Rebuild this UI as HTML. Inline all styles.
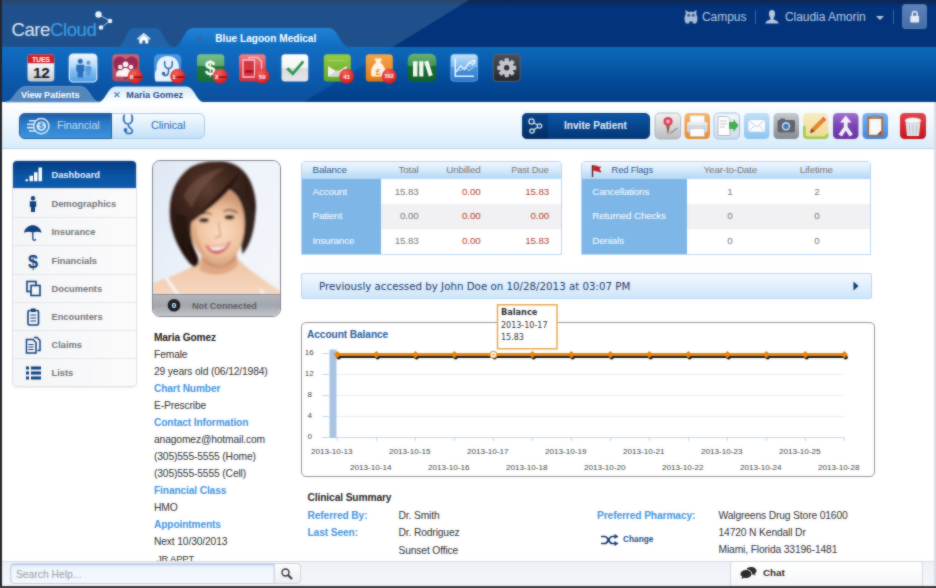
<!DOCTYPE html>
<html lang="en">
<head>
<meta charset="utf-8">
<title>CareCloud - Maria Gomez</title>
<style>
*{box-sizing:border-box;margin:0;padding:0}
html,body{width:936px;height:588px;overflow:hidden;background:#fff}
body{position:relative;font-family:"Liberation Sans",sans-serif;font-size:9.5px;color:#333}
.abs{position:absolute}
#wrap{position:absolute;left:0;top:0;width:936px;height:588px;overflow:hidden;}
#hdr{left:0;top:0;width:936px;height:47px;background:#02337b}
#hdrshade{left:0;top:0;width:936px;height:6px;background:linear-gradient(180deg,rgba(25,30,50,.5) 0,rgba(25,30,50,.42) 55%,rgba(25,30,50,0) 100%)}
#tb{left:0;top:47px;width:936px;height:55px;background:linear-gradient(180deg,#0c69ba 0%,#0a5eb0 25%,#044d9c 55%,#023f88 100%)}
#tbl{left:0;top:0;width:480px;height:103px;background:linear-gradient(180deg,rgba(200,255,240,.15) 0,rgba(200,255,240,.15) 47px,rgba(30,120,210,.3) 47px,rgba(30,120,210,.3) 103px);clip-path:polygon(0 0,469px 0,302px 103px,0 103px)}
#sub{left:0;top:101.700px;width:936px;height:47.300px;background:linear-gradient(180deg,#ffffff 0%,#f1f8fe 40%,#d9ecfb 100%);border-bottom:1px solid #b5d3ee}
#lb{left:0;top:0;width:2px;height:588px;background:#23252c}
#bb{left:0;top:586px;width:936px;height:2px;background:#3a3a3e}
#rb{left:934px;top:102px;width:2px;height:483px;background:#d9dde4}
.logo{left:11.500px;top:19px;font-size:18.5px;letter-spacing:-.4px;color:#dfe9f5;font-family:"Liberation Sans",sans-serif}
.logo b{font-weight:normal;color:#3ba0ea}
.tab1{fill:#1c5e9f}
.ic{position:absolute;top:54px;width:27px;height:27px;border-radius:4px;overflow:hidden}
.bdg{position:absolute;width:11px;height:11px;border-radius:6px;background:radial-gradient(circle at 40% 35%,#f25a55,#d0181c 70%);color:#fff;font-size:5px;font-weight:bold;text-align:center;line-height:11px;box-shadow:0 1px 1px rgba(0,0,0,.4)}
.stab{position:absolute;font-weight:bold;font-size:8px}
.usr{position:absolute;top:9.500px;color:#b9c9e2;font-size:12px;line-height:14px;white-space:nowrap;letter-spacing:-.05px}
</style>
</head>
<body>
<div id="wrap">
<div class="abs" id="hdr"></div>
<div class="abs" id="hdrshade"></div>
<div class="abs" id="tb"></div>
<div class="abs" id="tbl"></div>
<div class="abs" id="sub"></div>

<!-- header tabs -->
<svg class="abs" style="left:0;top:0" width="936" height="104" viewBox="0 0 936 104">
  <defs>
    <linearGradient id="gTabB" x1="0" y1="0" x2="0" y2="1"><stop offset="0" stop-color="#2183d6"/><stop offset="1" stop-color="#0f6cc0"/></linearGradient>
    <linearGradient id="gTabW" x1="0" y1="0" x2="0" y2="1"><stop offset="0" stop-color="#d4e8f9"/><stop offset="1" stop-color="#ffffff"/></linearGradient>
  </defs>
  <!-- home tab -->
  <path d="M116 47.5 C126 47.5 125 28 134 28 L155 28 C164 28 164 47.5 176 47.5 Z" fill="#1f64aa"/>
  <!-- blue lagoon tab -->
  <path d="M172 47.5 C184 47.5 182 28 194 28 L328 28 C340 28 338 47.5 352 47.5 Z" fill="url(#gTabB)"/>
  <!-- house icon -->
  <path d="M139.300 39 L143.800 35 L148.300 39 L148.300 43.600 L145.200 43.600 L145.200 40.600 L142.400 40.600 L142.400 43.600 L139.300 43.600 Z" fill="#fff"/>
  <path d="M137.500 39.300 L143.800 33.800 L150.100 39.300" fill="none" stroke="#fff" stroke-width="1.300"/>
  <text x="195.500" y="41.800" font-size="8.5" fill="#3c6496" font-weight="bold" font-family="Liberation Sans, sans-serif">✕</text>
  <text x="215.300" y="42.200" font-size="10.1" fill="#fff" font-weight="bold" font-family="Liberation Sans, sans-serif">Blue Lagoon Medical</text>
  <!-- sub tabs -->
  <path d="M6 102 C14 102 16 86.500 26 86.500 L80 86.500 C90 86.500 91 102 99 102 Z" fill="#5286bd" stroke="#74a2d2" stroke-width=".8"/>
  <text x="21.000" y="97.600" font-size="9.1" fill="#fff" font-weight="bold" font-family="Liberation Sans, sans-serif">View Patients</text>
  <path d="M97 102.500 C106 102.500 107 86.500 116 86.500 L186 86.500 C195 86.500 196 102.500 205 102.500 Z" fill="url(#gTabW)"/>
  <text x="112.800" y="97.800" font-size="9.200" fill="#5585bc" font-weight="bold" font-family="Liberation Sans, sans-serif">✕</text>
  <text x="126.300" y="97.500" font-size="9.15" fill="#1f4f8a" font-weight="bold" font-family="Liberation Sans, sans-serif">Maria Gomez</text>
</svg>

<!-- logo -->
<div class="abs logo">Care<b>Cloud</b></div>
<svg class="abs" style="left:90.500px;top:7px" width="28" height="28" viewBox="0 0 28 28">
  <path d="M7.500 7.500 L19 14 L10 20.500" fill="none" stroke="#9cc7f0" stroke-width="1"/>
  <circle cx="7.500" cy="7.500" r="3.200" fill="#e8f3fd"/>
  <circle cx="19" cy="14" r="2.300" fill="#e8f3fd"/>
  <circle cx="10" cy="20.500" r="2.300" fill="#e8f3fd"/>
</svg>

<!-- user area -->
<svg class="abs" style="left:684px;top:9px" width="16" height="16" viewBox="0 0 16 16"><path d="M1.500 1 L4.500 3 Q7 2.300 9.500 3 L12.500 1 L12.300 5.500 C14 8 14 11.500 12 14.500 L9 14.500 L8.500 12.500 L5.500 12.500 L5 14.500 L2 14.500 C0 11.500 0 8 1.700 5.500 Z" fill="#a9bcd8"/><circle cx="4.700" cy="6.300" r="1.500" fill="#3a5a94"/><circle cx="9.300" cy="6.300" r="1.500" fill="#3a5a94"/></svg>
<div class="usr" style="left:702px">Campus</div>
<div class="abs" style="left:755px;top:10px;width:1px;height:14px;background:#3f6399"></div>
<svg class="abs" style="left:764px;top:9px" width="16" height="16" viewBox="0 0 16 16"><path d="M8 1 C10.500 1 11 3 11 5 C11 7 10 8.500 9.500 9 L9.500 10.500 C12 11.500 14.500 12 14.500 14.500 L1.500 14.500 C1.500 12 4 11.500 6.500 10.500 L6.500 9 C6 8.500 5 7 5 5 C5 3 5.500 1 8 1Z" fill="#b8c8e0"/></svg>
<div class="usr" style="left:785px">Claudia Amorin</div>
<svg class="abs" style="left:874.500px;top:14.500px" width="10" height="6" viewBox="0 0 10 6"><path d="M1 1 L9 1 L5 5 Z" fill="#b8c8e0"/></svg>
<div class="abs" style="left:893px;top:10px;width:1px;height:14px;background:#3f6399"></div>
<div class="abs" style="left:902px;top:4px;width:25px;height:25px;border-radius:3px;background:linear-gradient(180deg,#5c82b9,#466ea8);border:1px solid #5379b0"></div>
<svg class="abs" style="left:902px;top:4px" width="25" height="25" viewBox="0 0 25 25"><rect x="8.300" y="11.800" width="8.800" height="6.800" rx="1" fill="#e4ebf6"/><path d="M10.300 12 L10.300 9.800 C10.300 6.800 15.100 6.800 15.100 9.800 L15.100 12" fill="none" stroke="#e4ebf6" stroke-width="1.500"/></svg>

<!-- toolbar icons -->
<svg class="abs" style="left:0;top:47px" width="560" height="56" viewBox="0 47 560 56" font-family="Liberation Sans, sans-serif">
  <defs>
    <linearGradient id="gCal" x1="0" y1="0" x2="0" y2="1"><stop offset="0" stop-color="#ffffff"/><stop offset=".45" stop-color="#f2f2f4"/><stop offset="1" stop-color="#c4c7cd"/></linearGradient>
    <linearGradient id="gPat" x1="0" y1="0" x2="0" y2="1"><stop offset="0" stop-color="#f2f9ff"/><stop offset=".45" stop-color="#b4d9f8"/><stop offset=".55" stop-color="#8cc4f4"/><stop offset="1" stop-color="#4d9ee6"/></linearGradient>
    <linearGradient id="gHeart" x1="0" y1="0" x2="0" y2="1"><stop offset="0" stop-color="#cc6478"/><stop offset="1" stop-color="#b04862"/></linearGradient>
    <linearGradient id="gSte" x1="0" y1="0" x2="0" y2="1"><stop offset="0" stop-color="#4c9ae4"/><stop offset="1" stop-color="#2f7fd0"/></linearGradient>
    <linearGradient id="gDol" x1="0" y1="0" x2="0" y2="1"><stop offset="0" stop-color="#7cc08c"/><stop offset=".42" stop-color="#5aa86c"/><stop offset=".44" stop-color="#237a3c"/><stop offset="1" stop-color="#1a6e32"/></linearGradient>
    <linearGradient id="gDoc" x1="0" y1="0" x2="0" y2="1"><stop offset="0" stop-color="#f08088"/><stop offset=".5" stop-color="#e04a54"/><stop offset="1" stop-color="#d23040"/></linearGradient>
    <linearGradient id="gChk" x1="0" y1="0" x2="0" y2="1"><stop offset="0" stop-color="#ffffff"/><stop offset=".5" stop-color="#f4f4f5"/><stop offset=".52" stop-color="#d9dbde"/><stop offset="1" stop-color="#e4e6e9"/></linearGradient>
    <linearGradient id="gMail" x1="0" y1="0" x2="0" y2="1"><stop offset="0" stop-color="#96cc44"/><stop offset="1" stop-color="#62a628"/></linearGradient>
    <linearGradient id="gBag" x1="0" y1="0" x2="0" y2="1"><stop offset="0" stop-color="#f4a650"/><stop offset="1" stop-color="#e2780f"/></linearGradient>
    <linearGradient id="gBook" x1="0" y1="0" x2="0" y2="1"><stop offset="0" stop-color="#68b276"/><stop offset=".42" stop-color="#3f9450"/><stop offset=".44" stop-color="#176a2c"/><stop offset="1" stop-color="#12602a"/></linearGradient>
    <linearGradient id="gGraph" x1="0" y1="0" x2="0" y2="1"><stop offset="0" stop-color="#c4e2fa"/><stop offset=".46" stop-color="#7cb8ee"/><stop offset=".5" stop-color="#4a94de"/><stop offset="1" stop-color="#2a78cc"/></linearGradient>
    <linearGradient id="gGear" x1="0" y1="0" x2="0" y2="1"><stop offset="0" stop-color="#4c4f58"/><stop offset="1" stop-color="#25272d"/></linearGradient>
    <radialGradient id="gBdg" cx=".4" cy=".3" r=".75"><stop offset="0" stop-color="#f0625c"/><stop offset="1" stop-color="#cf151d"/></radialGradient>
  </defs>
  <!-- calendar -->
  <rect x="27.500" y="54.200" width="26.800" height="27.200" rx="3.500" fill="url(#gCal)"/>
  <path d="M27.500 63.300 L27.500 57.700 Q27.500 54.200 31 54.200 L50.800 54.200 Q54.300 54.200 54.300 57.700 L54.300 63.300 Z" fill="#cc202c"/>
  <text x="40.900" y="61.900" font-size="7" font-weight="bold" fill="#fff" text-anchor="middle" letter-spacing="-.2">TUES</text>
  <text x="41.300" y="78" font-size="15.400" font-weight="bold" fill="#16181c" text-anchor="middle" letter-spacing="-.3">12</text>
  <!-- patients -->
  <rect x="69.300" y="54" width="27.500" height="28" rx="4" fill="url(#gPat)" stroke="#e2f1fd" stroke-width="1.200"/>
  <circle cx="80.300" cy="61.200" r="2.500" fill="#2a6cb8"/><path d="M76.300 64.800 L84.300 64.800 L84.300 71.500 L83 71.500 L83 77.500 L77.600 77.500 L77.600 71.500 L76.300 71.500 Z" fill="#2a6cb8"/>
  <circle cx="88.400" cy="62.800" r="2.100" fill="#5a9ad8"/><path d="M85.400 66 L91.400 66 L91.400 71.500 L90.500 71.500 L90.500 75.500 L86.300 75.500 L86.300 71.500 L85.400 71.500 Z" fill="#5a9ad8"/>
  <!-- heart/people -->
  <rect x="112.400" y="54.200" width="26.800" height="27.200" rx="3.500" fill="url(#gHeart)"/>
  <path d="M125.800 80 C118 74 113.500 68.500 113.500 63.500 C113.500 58.500 117 56.500 120 56.500 C122.500 56.500 124.500 58 125.800 60 C127.100 58 129.100 56.500 131.600 56.500 C134.600 56.500 138.100 58.500 138.100 63.500 C138.100 68.500 133.600 74 125.800 80 Z" fill="#9a2a52"/>
  <circle cx="120.300" cy="67" r="2.300" fill="#f6eef0"/><circle cx="131" cy="67" r="2.300" fill="#f6eef0"/><circle cx="125.600" cy="64.300" r="2.800" fill="#fbf6f7"/><path d="M116 76.500 C116 72 117.500 70 120.300 70 C122 70 123 70.800 123.600 72 L127.600 72 C128.200 70.800 129.200 70 131 70 C133.800 70 135.300 72 135.300 76.500 Z" fill="#f6eef0"/><path d="M120.800 76.500 C120.800 70.500 122.500 68 125.600 68 C128.700 68 130.400 70.500 130.400 76.500 Z" fill="#fbf6f7"/>
  <!-- stethoscope -->
  <rect x="154" y="54.200" width="27.300" height="27.200" rx="5" fill="url(#gSte)"/>
  <path d="M155.500 81.400 C154.300 76 155 71 156.500 69.500 C156 61 160.500 56 167.700 56 C175 56 179.500 61 179 69.500 C180.500 71 181 76 180 81.400 Z" fill="#e6f2fd"/>
  <path d="M165 61 C163.500 66 166 68.500 168.500 68.500 C171 68.500 173.500 66 172 61 M168.500 68.500 L168.500 71.500 C168.500 76.500 163 76.500 163.500 73.500" fill="none" stroke="#2a5fa6" stroke-width="1.400"/>
  <circle cx="163.500" cy="73.500" r="1.700" fill="#2a5fa6"/>
  <!-- dollar -->
  <rect x="197" y="54.200" width="27.300" height="27.200" rx="3.500" fill="url(#gDol)"/>
  <text x="210.300" y="75.300" font-size="19.500" font-weight="bold" fill="#fff" text-anchor="middle">$</text>
  <!-- docs -->
  <rect x="239" y="54.200" width="26.800" height="27.200" rx="3.500" fill="url(#gDoc)"/>
  <path d="M243 60 L254.500 60 L254.500 77 L243 77 Z" fill="#d83442" stroke="#f6c8cc" stroke-width="1.300"/>
  <path d="M249 60 L249 57.300 L257.500 57.300 L261.500 61.300 L261.500 74.500 L254.500 74.500" fill="none" stroke="#f6c8cc" stroke-width="1.300"/>
  <rect x="245" y="70" width="8.500" height="2.800" fill="#b01020"/>
  <!-- check -->
  <rect x="281.500" y="54.200" width="26.800" height="27.200" rx="3.500" fill="url(#gChk)"/>
  <path d="M287.300 68.300 L292.800 73.800 L303.300 61.300" fill="none" stroke="#2a964a" stroke-width="2.800"/>
  <!-- mail -->
  <rect x="323.800" y="54.200" width="27" height="27.200" rx="3.500" fill="url(#gMail)"/>
  <path d="M328 66 L337.300 72 L346.700 66 L346.700 76.500 L328 76.500 Z" fill="#f0f3ee"/>
  <path d="M328 76.500 L337.300 70 L346.700 76.500 Z" fill="#d4d9d0"/>
  <path d="M329 60.500 L345.500 60.500" stroke="#c4e494" stroke-width="1" stroke-dasharray="1 1"/>
  <!-- money bag -->
  <rect x="365.800" y="54.200" width="27" height="27.200" rx="3.500" fill="url(#gBag)"/>
  <path d="M374.500 58.500 L382 58.500 L380.300 62.500 C384.500 65.500 386.500 71 384.900 76.500 L371.700 76.500 C370 71 372 65.500 376.200 62.500 Z" fill="#fdf3e6"/>
  <text x="378.300" y="74.500" font-size="9" font-weight="bold" fill="#e88a24" text-anchor="middle">£</text>
  <!-- books -->
  <rect x="407.800" y="53.800" width="28.500" height="28.200" rx="6" fill="url(#gBook)"/>
  <rect x="413" y="61.200" width="4.500" height="15.300" fill="#f4f8f4"/><rect x="419.200" y="61.200" width="4.200" height="15.300" fill="#f4f8f4"/>
  <path d="M424.200 61.800 L428.200 60.600 L432.800 75.300 L428.800 76.500 Z" fill="#f4f8f4"/>
  <!-- graph -->
  <rect x="450.800" y="54.300" width="26.800" height="27" rx="3.500" fill="url(#gGraph)" stroke="#8cc0ee" stroke-width=".6"/>
  <path d="M456 72 L460.500 66 L464.500 69.500 L469.500 62 L473.500 65 M471 61 L474.500 60.500 L474 64" fill="none" stroke="#f2f8fe" stroke-width="1.400"/>
  <path d="M456.500 69 L460.500 70.500 L465 67 L469 70.500 L473 67.500" fill="none" stroke="#d8e8f8" stroke-width="1"/>
  <path d="M455.300 58.500 L455.300 76.300 L474 76.300" fill="none" stroke="#f2f8fe" stroke-width="1.500"/>
  <!-- gear -->
  <rect x="493.300" y="54.300" width="26.800" height="27" rx="3.500" fill="url(#gGear)" stroke="#60636c" stroke-width=".9"/>
  <g transform="translate(506.700 67.800)">
    <g fill="#c4c7cd">
      <rect x="-2.100" y="-9.500" width="4.200" height="19" rx="1"/>
      <rect x="-2.100" y="-9.500" width="4.200" height="19" rx="1" transform="rotate(45)"/>
      <rect x="-2.100" y="-9.500" width="4.200" height="19" rx="1" transform="rotate(90)"/>
      <rect x="-2.100" y="-9.500" width="4.200" height="19" rx="1" transform="rotate(135)"/>
      <circle r="7"/>
    </g>
    <circle r="2.700" fill="#2e3036"/>
  </g>
  <!-- badges -->
  <g font-size="6" font-weight="bold" fill="#fff" text-anchor="middle">
    <circle cx="135.200" cy="76.300" r="7.500" fill="url(#gBdg)"/><path d="M134 77.200 L142.300 77.200" stroke="#8e0e14" stroke-width="1.600"/><text x="131.500" y="79">8</text>
    <circle cx="177.700" cy="76.300" r="7.500" fill="url(#gBdg)"/><path d="M176.500 77.200 L184.800 77.200" stroke="#8e0e14" stroke-width="1.600"/><text x="174" y="79">1</text>
    <circle cx="220.200" cy="76.300" r="7.500" fill="url(#gBdg)"/><path d="M219 77.200 L227.300 77.200" stroke="#8e0e14" stroke-width="1.600"/><text x="216.500" y="79">3</text>
    <circle cx="262.200" cy="76.300" r="7.500" fill="url(#gBdg)"/><text x="262.200" y="78.500">50</text>
    <circle cx="346.700" cy="76.300" r="7.500" fill="url(#gBdg)"/><text x="346.700" y="78.500">41</text>
    <circle cx="389.200" cy="76.300" r="7.500" fill="url(#gBdg)"/><text x="389.200" y="78.300" font-size="5.400">502</text>
  </g>
</svg>
<!--TOOLBAR-ICONS-END-->
<!-- sub bar: toggle + actions -->
<div class="abs" style="left:19px;top:113px;width:186px;height:26px;border-radius:6px;border:1px solid #a9cdef;background:linear-gradient(180deg,#f4faff 0%,#dcedfb 55%,#c4e0f8 100%)"></div>
<div class="abs" style="left:19px;top:113px;width:93px;height:26px;border-radius:6px 0 0 6px;background:linear-gradient(180deg,#1c5ea6 0%,#2d7fcc 45%,#3e93dc 100%);border:1px solid #1d5c9e"></div>
<svg class="abs" style="left:19px;top:110px" width="186" height="30" viewBox="0 -3 186 30">
  <circle cx="22.300" cy="13.200" r="7.600" fill="none" stroke="#dcecfa" stroke-width="1.500"/>
  <circle cx="22.300" cy="13.200" r="4.800" fill="#dcecfa"/>
  <text x="22.300" y="16.300" font-size="8.500" font-weight="bold" fill="#2d7fcc" text-anchor="middle" font-family="Liberation Sans, sans-serif">$</text>
  <path d="M10 7.800 L16.500 7.800 M8 11.200 L14.500 11.200 M8 14.600 L14.500 14.600 M10 18 L16.500 18" stroke="#dcecfa" stroke-width="1.600"/>
  <path d="M105.500 1.500 C103 8 106 11 109 11 C112 11 115 8 112.500 1.500 M109 11 C109 15.500 113.500 15 113.500 18 C113.500 21.500 106 21.500 106.500 17.500" fill="none" stroke="#2a6db5" stroke-width="1.600"/>
  <circle cx="106.500" cy="17" r="1.900" fill="#2a6db5"/>
</svg>
<div class="abs" style="left:57px;top:118.500px;font-size:10.900px;line-height:13px;color:#c2daf2;letter-spacing:-.1px">Financial</div>
<div class="abs" style="left:151px;top:118.500px;font-size:10.900px;line-height:13px;color:#2d6cae;letter-spacing:-.1px">Clinical</div>

<div class="abs" style="left:522px;top:113px;width:128px;height:26px;border-radius:5px;background:linear-gradient(180deg,#0c57a8 0%,#08468e 50%,#04387a 100%);border:1px solid #06356e"></div>
<div class="abs" style="left:522px;top:113px;width:26px;height:26px;border-radius:5px 0 0 5px;background:linear-gradient(180deg,#0a468c,#032c62)"></div>
<svg class="abs" style="left:522px;top:113px" width="26" height="26" viewBox="0 0 26 26">
  <path d="M9.500 8.500 L17.500 13 L10 18" fill="none" stroke="#dbe7f5" stroke-width="1.200"/>
  <circle cx="9.500" cy="8.500" r="2.600" fill="#08407f" stroke="#dbe7f5" stroke-width="1.200"/>
  <circle cx="17.500" cy="13" r="2.200" fill="#08407f" stroke="#dbe7f5" stroke-width="1.200"/>
  <circle cx="10" cy="18" r="2.200" fill="#08407f" stroke="#dbe7f5" stroke-width="1.200"/>
</svg>
<div class="abs" style="left:564px;top:119.500px;font-size:10.100px;line-height:12px;font-weight:bold;color:#e3ecf8;white-space:nowrap">Invite Patient</div>

<svg class="abs" style="left:650px;top:108px" width="286" height="36" viewBox="650 108 286 36" font-family="Liberation Sans, sans-serif">
  <defs>
    <linearGradient id="aPin" x1="0" y1="0" x2="0" y2="1"><stop offset="0" stop-color="#f2f2f2"/><stop offset="1" stop-color="#b9bcc0"/></linearGradient>
    <linearGradient id="aPrn" x1="0" y1="0" x2="0" y2="1"><stop offset="0" stop-color="#f6b46a"/><stop offset="1" stop-color="#e88a2c"/></linearGradient>
    <linearGradient id="aDoc" x1="0" y1="0" x2="0" y2="1"><stop offset="0" stop-color="#f4f8fc"/><stop offset="1" stop-color="#cfdcea"/></linearGradient>
    <linearGradient id="aMail" x1="0" y1="0" x2="0" y2="1"><stop offset="0" stop-color="#bfe0fb"/><stop offset="1" stop-color="#8cc4f4"/></linearGradient>
    <linearGradient id="aCam" x1="0" y1="0" x2="0" y2="1"><stop offset="0" stop-color="#c6cad0"/><stop offset="1" stop-color="#858a93"/></linearGradient>
    <linearGradient id="aPen" x1="0" y1="0" x2="0" y2="1"><stop offset="0" stop-color="#f8ecc0"/><stop offset="1" stop-color="#f0d890"/></linearGradient>
    <linearGradient id="aPur" x1="0" y1="0" x2="0" y2="1"><stop offset="0" stop-color="#a070d0"/><stop offset=".5" stop-color="#7a44b4"/><stop offset="1" stop-color="#6a34a4"/></linearGradient>
    <linearGradient id="aClip" x1="0" y1="0" x2="0" y2="1"><stop offset="0" stop-color="#7ab2f2"/><stop offset="1" stop-color="#3f86e0"/></linearGradient>
    <linearGradient id="aTrash" x1="0" y1="0" x2="0" y2="1"><stop offset="0" stop-color="#e6424a"/><stop offset="1" stop-color="#c0141e"/></linearGradient>
  </defs>
  <!-- pin -->
  <rect x="655" y="113" width="25.500" height="26" rx="4.500" fill="url(#aPin)" stroke="#a9adb2" stroke-width=".8"/>
  <path d="M668 135 L666 124 L670 124 Z" fill="#8a5a3a"/>
  <circle cx="668" cy="121.500" r="4.600" fill="#dc4058"/><circle cx="668" cy="121.500" r="1.900" fill="#f4b8c0"/>
  <path d="M670 133.500 L677.500 128" stroke="#8a8e94" stroke-width="1.300"/>
  <!-- printer -->
  <rect x="684.500" y="113" width="25.500" height="26" rx="4.500" fill="url(#aPrn)"/>
  <rect x="690" y="115.500" width="14.500" height="8" fill="#fbfbfc" stroke="#c4c8ce" stroke-width=".5"/>
  <rect x="687" y="122" width="20.500" height="10.500" rx="1.800" fill="#d4d8de"/>
  <rect x="687" y="122" width="20.500" height="3" rx="1.500" fill="#e8ebef"/>
  <rect x="690" y="128.500" width="14.500" height="8" fill="#fdfdfd" stroke="#b0b4ba" stroke-width=".5"/>
  <!-- doc export -->
  <rect x="714" y="113" width="25.500" height="26" rx="4.500" fill="url(#aDoc)" stroke="#9cc0e8" stroke-width="1"/>
  <path d="M718 116.500 L727 116.500 L730 119.500 L730 135.500 L718 135.500 Z" fill="#fff" stroke="#9aa2ac" stroke-width=".7"/>
  <path d="M720 121 L727 121 M720 124 L727 124 M720 127 L725 127" stroke="#b4bac2" stroke-width=".9"/>
  <path d="M729 122 L733.500 122 L733.500 119 L738.500 125.500 L733.500 132 L733.500 129 L729 129 Z" fill="#46ac52"/>
  <!-- mail -->
  <rect x="744" y="113" width="25.500" height="26" rx="4.500" fill="url(#aMail)"/>
  <rect x="748" y="119.500" width="17.500" height="12.500" fill="#fafcff" stroke="#b4c8de" stroke-width=".7"/>
  <path d="M748 119.500 L756.750 127 L765.500 119.500 M748 132 L754.500 125.500 M765.500 132 L759 125.500" fill="none" stroke="#b4c8de" stroke-width=".9"/>
  <!-- camera -->
  <rect x="773.500" y="113" width="25.500" height="26" rx="4.500" fill="url(#aCam)"/>
  <rect x="777.500" y="120" width="17.500" height="12.500" rx="1.800" fill="#5e636d"/>
  <rect x="780" y="118.500" width="5" height="2.500" fill="#5e636d"/>
  <circle cx="786" cy="126.300" r="4.200" fill="#c9d6e6"/>
  <circle cx="786" cy="126.300" r="2.600" fill="#3a78c0"/>
  <!-- pencil -->
  <rect x="803" y="113" width="25.500" height="26" rx="4.500" fill="url(#aPen)"/>
  <path d="M803 126 L805.500 126 L805.500 134 Q805.500 136.500 808 136.500 L824 136.500 Q826 136.500 826 134 L828.500 134 L828.500 134.500 Q828.500 139 824 139 L807.500 139 Q803 139 803 134.500 Z" fill="#9ccc4c"/>
  <path d="M810 133 L811.500 128.500 L821.500 118.500 L824.500 121.500 L814.500 131.500 Z" fill="#e8822c"/>
  <path d="M821.500 118.500 L823.300 116.700 L826.300 119.700 L824.500 121.500 Z" fill="#e05a6a"/>
  <path d="M810 133 L811.500 128.500 L814.500 131.500 Z" fill="#5a4a3a"/>
  <!-- purple merge -->
  <rect x="833" y="113" width="25.500" height="26" rx="4.500" fill="url(#aPur)"/>
  <path d="M845.750 115.500 L851.500 122.500 L847.700 122.500 L847.700 127 L853 134.500 L849.500 136.500 L845.750 130.500 L842 136.500 L838.500 134.500 L843.800 127 L843.800 122.500 L840 122.500 Z" fill="#f4f1f8"/>
  <!-- clipboard -->
  <rect x="862.500" y="113" width="25.500" height="26" rx="4.500" fill="url(#aClip)"/>
  <rect x="867.500" y="116.500" width="15.500" height="20" rx="1.200" fill="#a8683c"/>
  <rect x="869.200" y="118.800" width="12.100" height="16" fill="#f6f8fa"/>
  <rect x="871.500" y="115" width="7.500" height="3.300" rx="1" fill="#8a8e94"/>
  <path d="M877 134.800 L881.300 130.500 L881.300 134.800 Z" fill="#6a4424"/>
  <!-- trash -->
  <rect x="900" y="113" width="26" height="26" rx="4.500" fill="url(#aTrash)"/>
  <path d="M905.500 121 L920.500 121 L919 136 L907 136 Z" fill="#e0e3e8"/>
  <ellipse cx="913" cy="120.500" rx="8" ry="2.800" fill="#f6f7f9" stroke="#b8bcc2" stroke-width=".6"/>
  <path d="M909.300 125 L909.800 134 M913 125 L913 134 M916.700 125 L916.200 134" stroke="#b4b8c0" stroke-width=".9"/>
</svg>
<!--SUBBAR-END-->
<!-- sidebar -->
<style>
#side{left:12.200px;top:160.200px;width:124.800px;height:226.500px;border:1px solid #dfe3e8;border-radius:5px;background:#f6f7f9;overflow:hidden;box-shadow:0 1px 2px rgba(0,0,0,.08)}
#side .row{position:absolute;left:0;width:124.800px;height:28.100px;border-top:1px solid #e4e7eb;background:linear-gradient(90deg,#f4f5f7,#fbfbfc)}
#side .row span{position:absolute;left:38.300px;top:9.100px;font-size:9.300px;font-weight:bold;color:#73767b;white-space:nowrap}
#side .row.on{background:linear-gradient(180deg,#043c84 0%,#0a55a4 55%,#0d5cae 100%);border-top:0;height:27px}
#side .row.on span{color:#e8f0fa}
#side svg{position:absolute;left:.800px;top:.300px}
</style>
<div class="abs" id="side">
  <div class="row on" style="top:0"><span>Dashboard</span>
    <svg width="38" height="28" viewBox="0 0 38 28"><path d="M11.500 18.300 L14 18.300 L14 20.300 L11.500 20.300 Z M15.500 14.800 L19 14.800 L19 20.300 L15.500 20.300 Z M20 11.300 L23.500 11.300 L23.500 20.300 L20 20.300 Z M24.500 6.500 L28 6.500 L28 20.300 L24.500 20.300 Z" fill="#fff"/></svg></div>
  <div class="row" style="top:27px;height:29.200px"><span style="margin-top:1.100px">Demographics</span>
    <svg style="margin-top:1.100px" width="38" height="28" viewBox="0 0 38 28"><circle cx="19" cy="7.300" r="2.200" fill="#10407e"/><path d="M15.800 10.200 L22.200 10.200 L22.200 16 L21 16 L21 21 L17 21 L17 16 L15.800 16 Z" fill="#10407e"/></svg></div>
  <div class="row" style="top:56.2px"><span>Insurance</span>
    <svg width="38" height="28" viewBox="0 0 38 28"><path d="M10 13.800 C10.500 8.800 15.500 6.300 18.800 6.300 C22 6.300 27 8.800 27.500 13.800 C24.500 12.500 21.500 12.500 18.800 13.800 C16 12.500 13 12.500 10 13.800 Z" fill="#10407e"/><path d="M18.800 13.500 L18.800 19.500 C18.800 21.800 21.600 21.800 21.600 20" fill="none" stroke="#10407e" stroke-width="1.300"/></svg></div>
  <div class="row" style="top:84.3px"><span>Financials</span>
    <svg width="38" height="28" viewBox="0 0 38 28"><text x="19" y="21" font-size="18" font-weight="bold" fill="#10407e" text-anchor="middle" font-family="Liberation Sans, sans-serif">$</text></svg></div>
  <div class="row" style="top:112.4px"><span>Documents</span>
    <svg width="38" height="28" viewBox="0 0 38 28"><rect x="13" y="6.500" width="9" height="10" fill="none" stroke="#10407e" stroke-width="1.600"/><rect x="17" y="10.500" width="9" height="10" fill="#f6f7f9" stroke="#10407e" stroke-width="1.600"/></svg></div>
  <div class="row" style="top:140.5px"><span>Encounters</span>
    <svg width="38" height="28" viewBox="0 0 38 28"><rect x="14" y="7.500" width="10.500" height="14.500" rx="1.500" fill="none" stroke="#10407e" stroke-width="1.600"/><rect x="17" y="5.500" width="4.500" height="3.500" fill="#10407e"/><path d="M16.500 12 L22 12 M16.500 15 L22 15 M16.500 18 L22 18" stroke="#10407e" stroke-width="1"/></svg></div>
  <div class="row" style="top:168.6px"><span>Claims</span>
    <svg width="38" height="28" viewBox="0 0 38 28"><path d="M12.500 8.500 L19 8.500 L22 11.500 L22 22 L12.500 22 Z" fill="none" stroke="#10407e" stroke-width="1.500"/><path d="M20 6.500 L23 6.500 L26 9.500 L26 19.500 L23.500 19.500" fill="none" stroke="#10407e" stroke-width="1.500"/><path d="M14.500 13.500 L19.500 13.500 M14.500 16 L19.500 16 M14.500 18.500 L19.500 18.500" stroke="#10407e" stroke-width="1"/></svg></div>
  <div class="row" style="top:196.7px;height:30px"><span>Lists</span>
    <svg width="38" height="28" viewBox="0 0 38 28"><path d="M12 9 L15 9 M17 9 L27 9 M12 14 L15 14 M17 14 L27 14 M12 19 L15 19 M17 19 L27 19" stroke="#10407e" stroke-width="3"/></svg></div>
</div>
<!--SIDEBAR-END-->
<!-- photo -->
<div class="abs" style="left:151.500px;top:160px;width:129px;height:157px;border-radius:8px;border:1.500px solid #82868c;overflow:hidden;background:#e9eff8">
<svg style="position:absolute;left:-1.500px;top:-1.500px" width="129" height="157" viewBox="151.500 160 129 157">
  <defs>
    <linearGradient id="pBg" x1="0" y1="0" x2="1" y2=".6"><stop offset="0" stop-color="#dde7f4"/><stop offset=".55" stop-color="#eef3fa"/><stop offset="1" stop-color="#f3f5fa"/></linearGradient>
    <radialGradient id="pHair" gradientUnits="userSpaceOnUse" cx="208" cy="188" r="62"><stop offset="0" stop-color="#5e3f33"/><stop offset=".35" stop-color="#44291f"/><stop offset=".75" stop-color="#2e1a15"/><stop offset="1" stop-color="#20110e"/></radialGradient>
    <radialGradient id="pSkin" gradientUnits="userSpaceOnUse" cx="220" cy="232" r="36"><stop offset="0" stop-color="#fbdcc2"/><stop offset=".6" stop-color="#f0c3a0"/><stop offset="1" stop-color="#cf9a76"/></radialGradient>
    <linearGradient id="pBody" x1="0" y1="0" x2="0" y2="1"><stop offset="0" stop-color="#eec2a2"/><stop offset="1" stop-color="#f6d8c2"/></linearGradient>
    <linearGradient id="pBar" x1="0" y1="0" x2="0" y2="1"><stop offset="0" stop-color="#b4b7bd"/><stop offset=".5" stop-color="#a3a6ad"/><stop offset="1" stop-color="#c6c8cd"/></linearGradient>
    <filter id="pBlur" x="-10%" y="-10%" width="120%" height="120%"><feGaussianBlur stdDeviation=".9"/></filter>
  </defs>
  <rect x="151" y="160" width="130" height="157" fill="url(#pBg)"/>
  <g filter="url(#pBlur)">
    <!-- shoulders -->
    <path d="M151 296 L151 284 C162 280 176 275 188 269 L202 260 L236 256 C244 266 258 276 281 291 L281 296 Z" fill="url(#pBody)"/>
    <!-- neck -->
    <path d="M202 250 L237 246 L238 266 C228 276 210 277 200 270 Z" fill="#dfa884"/>
    <path d="M204 262 C214 270 226 270 236 260 L237 252 L203 254 Z" fill="#c98e6a"/>
    <!-- straps -->
    <path d="M168 277.500 L181 296 L178 296 L165.500 278.500 Z" fill="#fafafc"/>
    <path d="M259 288 L264 296 L267 296 L262 289.500 Z" fill="#fafafc"/>
    <!-- hair back (right side, behind face) -->
    <path d="M220 166 C250 168 258 192 256 212 C255 232 250 246 243 254 L240 236 L238 204 L224 190 Z" fill="#33201a"/>
    <!-- face -->
    <path d="M229 189 C238 193 244 204 245 218 C246 232 243 246 236 256 C230 263 224 266.500 219 266 C210 265 200 256 194 244 C190 236 189 228 190 221 C200 214 218 202 229 189 Z" fill="url(#pSkin)"/>
    <!-- cheek shading -->
    <path d="M192 230 C194 244 202 256 212 262 C204 252 198 240 196 226 Z" fill="#d9a27c" opacity=".7"/>
    <!-- hair main -->
    <path d="M216 161.500 C232 160 246 168 252 184 C256 194 257 206 255 218 C252 206 246 196 240 190 C236 187 232 187 229 189 C222 199 208 211 192 222 C190 232 192 244 198 256 C200 261 200 266 194 267 C184 258 174 240 171 222 C168 200 174 180 190 168 C198 163 207 161.500 216 161.500 Z" fill="url(#pHair)"/>
    <!-- hair highlight -->
    <path d="M184 196 C192 180 208 170 226 168 C212 176 200 190 192 208 Z" fill="#8a6a58" opacity=".4"/>
    <!-- dark part line / fringe shadow -->
    <path d="M240 172 C236 186 222 200 198 216 C214 198 228 186 240 172 Z" fill="#2a1814"/>
    <path d="M176 214 C178 236 186 254 196 265 C190 250 186 234 186 216 Z" fill="#241410" opacity=".8"/>
    <!-- eyes, brows -->
    <ellipse cx="204.500" cy="220.300" rx="4.800" ry="2.200" fill="#2e1e1a"/>
    <ellipse cx="230" cy="217.300" rx="4.800" ry="2.200" fill="#2e1e1a"/>
    <path d="M198 216 C203 212.500 209 212.500 212 214.500" stroke="#4a3028" stroke-width="1.400" fill="none"/>
    <path d="M224 211.500 C229 209 235 210 238 213" stroke="#4a3028" stroke-width="1.400" fill="none"/>
    <!-- nose shadow -->
    <path d="M219 222 L221 236 L215.500 238" stroke="#d29a76" stroke-width="1.400" fill="none"/>
    <!-- mouth -->
    <path d="M205.500 244.500 C213 248 224 247 231.500 241 C229 250 221 255.500 214 253.500 C210 252 207 249 205.500 244.500 Z" fill="#cf5a5e"/>
    <path d="M208 246 C214 248.500 223 247.500 229 243.500 C226 248.500 219 251.500 213 250 Z" fill="#fdf8f4"/>
  </g>
  <!-- status bar -->
  <rect x="151" y="294" width="130" height="23" fill="url(#pBar)"/>
  <rect x="151" y="294" width="130" height="1" fill="#8f9299"/>
  <circle cx="174.500" cy="305.200" r="6.300" fill="#1e2028"/>
  <text x="174.500" y="308.300" font-size="8" font-weight="bold" fill="#fff" text-anchor="middle" font-family="Liberation Sans, sans-serif">0</text>
  <text x="192.500" y="308.500" font-size="9.150" font-weight="bold" fill="#5c5f66" font-family="Liberation Sans, sans-serif">Not Connected</text>
</svg>
</div>
<!--PHOTO-END-->
<!-- patient info -->
<style>
.pi{position:absolute;margin-top:.700px;left:154px;font-size:10.300px;color:#333;white-space:nowrap;line-height:12px;letter-spacing:-.15px}
.pi.h{font-weight:bold;color:#4696e0;font-size:10.150px;letter-spacing:-.1px}
.pi.n{font-weight:bold;color:#222;font-size:10.150px;letter-spacing:-.1px}
</style>
<div class="pi n" style="top:331.500px">Maria Gomez</div>
<div class="pi" style="top:348.500px">Female</div>
<div class="pi" style="top:365.500px">29 years old (06/12/1984)</div>
<div class="pi h" style="top:382.500px">Chart Number</div>
<div class="pi" style="top:399.500px">E-Prescribe</div>
<div class="pi h" style="top:416.500px">Contact Information</div>
<div class="pi" style="top:433.500px">anagomez@hotmail.com</div>
<div class="pi" style="top:450.500px">(305)555-5555 (Home)</div>
<div class="pi" style="top:467.500px">(305)555-5555 (Cell)</div>
<div class="pi h" style="top:484.500px">Financial Class</div>
<div class="pi" style="top:501.500px">HMO</div>
<div class="pi h" style="top:518.500px">Appointments</div>
<div class="pi" style="top:535.500px">Next 10/30/2013</div>
<div class="pi" style="top:552.800px;left:157px;font-size:9.400px">JR APPT</div>
<!--PATIENT-END-->
<!-- tables -->
<style>
.tbl{position:absolute;top:160.500px;height:94px;border:1px solid #b9d6f0;border-radius:4px 4px 0 0;background:#fff;overflow:hidden}
.tbl .hd{position:absolute;left:0;top:0;width:100%;height:17.700px;background:linear-gradient(180deg,#eef6fe 0%,#d8ebfb 45%,#b2d7f6 100%)}
.tbl .lc{position:absolute;left:0;top:17.700px;height:75px;background:#7db6e7}
.tbl .alt{position:absolute;left:0;top:42.700px;width:100%;height:25px;background:#f1f1f4}
.tbl span{position:absolute;font-size:9.800px;white-space:nowrap;line-height:10px;letter-spacing:-.15px;color:#777}
.tbl span.hl{color:#2a5a92}
.tbl span.l{color:#ffffff}
.tbl span.r{color:#b5432e}
.tbl span.c{transform:translateX(-50%)}
</style>
<div class="tbl" style="left:301px;width:261px">
  <div class="hd"></div><div class="alt"></div><div class="lc" style="width:78.500px"></div>
  <span class="hl" style="left:10.500px;top:3.300px">Balance</span>
  <span style="right:142.500px;top:3.300px">Total</span>
  <span style="right:80.500px;top:3.300px">Unbilled</span>
  <span style="right:12.500px;top:3.300px;font-size:9.400px">Past Due</span>
  <span class="l" style="left:10.500px;top:25.100px">Account</span>
  <span class="l" style="left:10.500px;top:49.500px">Patient</span>
  <span class="l" style="left:10.500px;top:74.200px">Insurance</span>
  <span style="right:142.500px;top:25.100px">15.83</span><span class="r" style="right:80.500px;top:25.100px">0.00</span><span class="r" style="right:12px;top:25.100px">15.83</span>
  <span style="right:142.500px;top:49.500px">0.00</span><span class="r" style="right:80.500px;top:49.500px">0.00</span><span class="r" style="right:12px;top:49.500px">0.00</span>
  <span style="right:142.500px;top:74.200px">15.83</span><span class="r" style="right:80.500px;top:74.200px">0.00</span><span class="r" style="right:12px;top:74.200px">15.83</span>
</div>
<div class="tbl" style="left:580.800px;width:290.500px">
  <div class="hd"></div><div class="alt"></div><div class="lc" style="width:105px"></div>
  <svg style="position:absolute;left:8px;top:2px" width="14" height="14" viewBox="0 0 14 14"><path d="M2.500 1 L2.500 13" stroke="#5a1a1a" stroke-width="1.400"/><path d="M3.200 1.500 C6 .5 8 3.500 11.500 2.500 L9.500 5 L11.500 8 C8 9 6 6 3.200 7 Z" fill="#c21f26"/></svg>
  <span class="hl" style="left:29.800px;top:3.300px;font-size:9.400px">Red Flags</span>
  <span class="c" style="left:148.500px;top:3.300px">Year-to-Date</span>
  <span class="c" style="left:234.500px;top:3.300px">Lifetime</span>
  <span class="l" style="left:10.500px;top:25.100px">Cancellations</span>
  <span class="l" style="left:10.500px;top:49.500px">Returned Checks</span>
  <span class="l" style="left:10.500px;top:74.200px">Denials</span>
  <span class="c" style="left:148px;top:25.100px">1</span><span class="c" style="left:235px;top:25.100px">2</span>
  <span class="c" style="left:148px;top:49.500px">0</span><span class="c" style="left:235px;top:49.500px">0</span>
  <span class="c" style="left:148px;top:74.200px">0</span><span class="c" style="left:235px;top:74.200px">0</span>
</div>
<!-- previously accessed -->
<div class="abs" style="left:301px;top:273px;width:571px;height:25.500px;border:1px solid #b9d6f0;border-radius:2px;background:linear-gradient(180deg,#f2f8fe 0%,#e0effc 50%,#cfe5fa 100%)"></div>
<div class="abs" style="left:319px;top:279.500px;font-family:'DejaVu Sans',sans-serif;font-size:10.270px;color:#1f3c6c;white-space:nowrap;line-height:12px" id="prev">Previously accessed by John Doe on 10/28/2013 at 03:07 PM</div>
<svg class="abs" style="left:852px;top:280px" width="8" height="12" viewBox="0 0 8 12"><path d="M1.500 1.500 L6.500 6 L1.500 10.500 Z" fill="#0d3a7a"/></svg>
<!--TABLES-END-->
<!-- chart -->
<div class="abs" style="left:300.500px;top:321.500px;width:574px;height:155.500px;border:1.800px solid #97979b;border-radius:5px;background:#fff"></div>
<svg class="abs" style="left:301px;top:300px" width="575" height="180" viewBox="301 300 575 180" font-family="Liberation Sans, sans-serif">
<text x="307" y="337.500" font-size="10.200" font-weight="bold" fill="#2a5f9e" letter-spacing="-.1">Account Balance</text>
<path d="M336.500 353.5 L844.500 353.5" stroke="#ececf0" stroke-width="1"/>
<path d="M336.500 374.5 L844.500 374.5" stroke="#ececf0" stroke-width="1"/>
<path d="M336.500 395.5 L844.500 395.5" stroke="#ececf0" stroke-width="1"/>
<path d="M336.500 416.5 L844.500 416.5" stroke="#ececf0" stroke-width="1"/>
<path d="M329 437.500 L844.500 437.500" stroke="#c3d7ef" stroke-width="1"/>
<text x="304.8" y="355.0" font-size="8" fill="#444">16</text>
<path d="M322 353.5 L329 353.5" stroke="#c3d7ef" stroke-width="1"/>
<text x="304.8" y="376.0" font-size="8" fill="#444">12</text>
<path d="M322 374.5 L329 374.5" stroke="#c3d7ef" stroke-width="1"/>
<text x="307.5" y="397.0" font-size="8" fill="#444">8</text>
<path d="M322 395.5 L329 395.5" stroke="#c3d7ef" stroke-width="1"/>
<text x="307.5" y="418.0" font-size="8" fill="#444">4</text>
<path d="M322 416.5 L329 416.5" stroke="#c3d7ef" stroke-width="1"/>
<text x="307.5" y="439.0" font-size="8" fill="#444">0</text>
<path d="M322 437.5 L329 437.5" stroke="#c3d7ef" stroke-width="1"/>
<rect x="329.500" y="349.500" width="7" height="88.500" fill="#a9c3e3"/>
<path d="M337.4 437.500 L337.4 441" stroke="#c3d7ef" stroke-width="1"/>
<path d="M376.4 437.500 L376.4 441" stroke="#c3d7ef" stroke-width="1"/>
<path d="M415.4 437.500 L415.4 441" stroke="#c3d7ef" stroke-width="1"/>
<path d="M454.4 437.500 L454.4 441" stroke="#c3d7ef" stroke-width="1"/>
<path d="M493.4 437.500 L493.4 441" stroke="#c3d7ef" stroke-width="1"/>
<path d="M532.4 437.500 L532.4 441" stroke="#c3d7ef" stroke-width="1"/>
<path d="M571.4 437.500 L571.4 441" stroke="#c3d7ef" stroke-width="1"/>
<path d="M610.4 437.500 L610.4 441" stroke="#c3d7ef" stroke-width="1"/>
<path d="M649.4 437.500 L649.4 441" stroke="#c3d7ef" stroke-width="1"/>
<path d="M688.4 437.500 L688.4 441" stroke="#c3d7ef" stroke-width="1"/>
<path d="M727.4 437.500 L727.4 441" stroke="#c3d7ef" stroke-width="1"/>
<path d="M766.4 437.500 L766.4 441" stroke="#c3d7ef" stroke-width="1"/>
<path d="M805.4 437.500 L805.4 441" stroke="#c3d7ef" stroke-width="1"/>
<path d="M844.4 437.500 L844.4 441" stroke="#c3d7ef" stroke-width="1"/>
<path d="M337.400 357 L844.400 357" stroke="#1c1c1c" stroke-width="1.800"/>
<circle cx="338.6" cy="357.300" r="2.200" fill="#1c1c1c"/>
<circle cx="377.6" cy="357.300" r="2.200" fill="#1c1c1c"/>
<circle cx="416.6" cy="357.300" r="2.200" fill="#1c1c1c"/>
<circle cx="455.6" cy="357.300" r="2.200" fill="#1c1c1c"/>
<circle cx="494.6" cy="357.300" r="2.200" fill="#1c1c1c"/>
<circle cx="533.6" cy="357.300" r="2.200" fill="#1c1c1c"/>
<circle cx="572.6" cy="357.300" r="2.200" fill="#1c1c1c"/>
<circle cx="611.6" cy="357.300" r="2.200" fill="#1c1c1c"/>
<circle cx="650.6" cy="357.300" r="2.200" fill="#1c1c1c"/>
<circle cx="689.6" cy="357.300" r="2.200" fill="#1c1c1c"/>
<circle cx="728.6" cy="357.300" r="2.200" fill="#1c1c1c"/>
<circle cx="767.6" cy="357.300" r="2.200" fill="#1c1c1c"/>
<circle cx="806.6" cy="357.300" r="2.200" fill="#1c1c1c"/>
<circle cx="845.6" cy="357.300" r="2.200" fill="#1c1c1c"/>
<path d="M337.400 354.600 L844.400 354.600" stroke="#e8860c" stroke-width="3"/>
<path d="M337.4 351 L341.0 354.600 L337.4 358.200 L333.8 354.600 Z" fill="#e8830c"/>
<path d="M376.4 351 L380.0 354.600 L376.4 358.200 L372.8 354.600 Z" fill="#e8830c"/>
<path d="M415.4 351 L419.0 354.600 L415.4 358.200 L411.8 354.600 Z" fill="#e8830c"/>
<path d="M454.4 351 L458.0 354.600 L454.4 358.200 L450.8 354.600 Z" fill="#e8830c"/>
<path d="M532.4 351 L536.0 354.600 L532.4 358.200 L528.8 354.600 Z" fill="#e8830c"/>
<path d="M571.4 351 L575.0 354.600 L571.4 358.200 L567.8 354.600 Z" fill="#e8830c"/>
<path d="M610.4 351 L614.0 354.600 L610.4 358.200 L606.8 354.600 Z" fill="#e8830c"/>
<path d="M649.4 351 L653.0 354.600 L649.4 358.200 L645.8 354.600 Z" fill="#e8830c"/>
<path d="M688.4 351 L692.0 354.600 L688.4 358.200 L684.8 354.600 Z" fill="#e8830c"/>
<path d="M727.4 351 L731.0 354.600 L727.4 358.200 L723.8 354.600 Z" fill="#e8830c"/>
<path d="M766.4 351 L770.0 354.600 L766.4 358.200 L762.8 354.600 Z" fill="#e8830c"/>
<path d="M805.4 351 L809.0 354.600 L805.4 358.200 L801.8 354.600 Z" fill="#e8830c"/>
<path d="M844.4 351 L848.0 354.600 L844.4 358.200 L840.8 354.600 Z" fill="#e8830c"/>
<circle cx="493.4" cy="354.600" r="3.300" fill="#fff" stroke="#f0a040" stroke-width="1.300"/>
<circle cx="493.4" cy="354.600" r="1.200" fill="#f0b060"/>
<text x="331.7" y="453.5" font-size="8.100" fill="#444" text-anchor="middle">2013-10-13</text>
<text x="370.7" y="470" font-size="8.100" fill="#444" text-anchor="middle">2013-10-14</text>
<text x="409.7" y="453.5" font-size="8.100" fill="#444" text-anchor="middle">2013-10-15</text>
<text x="448.7" y="470" font-size="8.100" fill="#444" text-anchor="middle">2013-10-16</text>
<text x="487.7" y="453.5" font-size="8.100" fill="#444" text-anchor="middle">2013-10-17</text>
<text x="526.7" y="470" font-size="8.100" fill="#444" text-anchor="middle">2013-10-18</text>
<text x="565.7" y="453.5" font-size="8.100" fill="#444" text-anchor="middle">2013-10-19</text>
<text x="604.7" y="470" font-size="8.100" fill="#444" text-anchor="middle">2013-10-20</text>
<text x="643.7" y="453.5" font-size="8.100" fill="#444" text-anchor="middle">2013-10-21</text>
<text x="682.7" y="470" font-size="8.100" fill="#444" text-anchor="middle">2013-10-22</text>
<text x="721.7" y="453.5" font-size="8.100" fill="#444" text-anchor="middle">2013-10-23</text>
<text x="760.7" y="470" font-size="8.100" fill="#444" text-anchor="middle">2013-10-24</text>
<text x="799.7" y="453.5" font-size="8.100" fill="#444" text-anchor="middle">2013-10-25</text>
<text x="838.7" y="470" font-size="8.100" fill="#444" text-anchor="middle">2013-10-28</text>
<rect x="497.500" y="304.800" width="59.500" height="44" fill="#fff" stroke="#eaa652" stroke-width="1.500"/>
<g font-family="DejaVu Sans, sans-serif" font-size="8" fill="#333"><text x="501" y="315" font-weight="bold" font-size="8.200">Balance</text><text x="501" y="327.500">2013-10-17</text><text x="501" y="339.500">15.83</text></g>
</svg>
<!--CHART-END-->
<!-- clinical summary -->
<style>
.cs{position:absolute;margin-top:.800px;font-size:10.300px;color:#333;white-space:nowrap;line-height:12px;letter-spacing:-.15px}
.cs.b{font-weight:bold;color:#4696e0;font-size:10.200px;letter-spacing:-.1px}
</style>
<div class="cs" style="left:307.500px;top:491px;font-weight:bold;color:#2a2a2a;font-size:10.200px;letter-spacing:-.1px">Clinical Summary</div>
<div class="cs b" style="left:307.500px;top:509px">Referred By:</div>
<div class="cs" style="left:398.500px;top:509px">Dr. Smith</div>
<div class="cs b" style="left:307.500px;top:526.500px">Last Seen:</div>
<div class="cs" style="left:398.500px;top:526.500px">Dr. Rodriguez</div>
<div class="cs" style="left:398.500px;top:544px">Sunset Office</div>
<div class="cs b" style="left:597px;top:509px">Preferred Pharmacy:</div>
<div class="cs" style="left:718.500px;top:509px">Walgreens Drug Store 01600</div>
<div class="cs" style="left:718.500px;top:526px">14720 N Kendall Dr</div>
<div class="cs" style="left:718.500px;top:543.500px">Miami, Florida 33196-1481</div>
<svg class="abs" style="left:600px;top:533px" width="20" height="14" viewBox="0 0 20 14"><path d="M1 3.500 L5 3.500 C8 3.500 9 10.500 12 10.500 L15 10.500 M1 10.500 L5 10.500 C8 10.500 9 3.500 12 3.500 L15 3.500" fill="none" stroke="#14396e" stroke-width="1.700"/><path d="M14.500 1 L18.500 3.500 L14.500 6 Z M14.500 8 L18.500 10.500 L14.500 13 Z" fill="#14396e"/></svg>
<div class="abs" style="left:623px;top:535px;font-size:8.300px;font-weight:bold;color:#1d4f91;white-space:nowrap;line-height:9px">Change</div>
<!--CLINICAL-END-->
<!-- footer -->
<div class="abs" style="left:0;top:560.500px;width:936px;height:27px;background:linear-gradient(180deg,#eef1f6,#f4f6fa);border-top:1px solid #d8dce2"></div>
<div class="abs" style="left:10px;top:563px;width:265px;height:21px;border:1px solid #c2d4ea;border-radius:4px 0 0 4px;background:linear-gradient(180deg,#e4eefa 0%,#f1f6fd 30%,#f4f8fe 100%);box-shadow:inset 0 1px 2px rgba(90,130,180,.35)"></div>
<div class="abs" style="left:16px;top:568.500px;font-size:10.300px;color:#9a9da3;white-space:nowrap;line-height:11px">Search Help...</div>
<div class="abs" style="left:274px;top:563px;width:27px;height:21px;border:1px solid #d0d6de;border-radius:0 4px 4px 0;background:linear-gradient(180deg,#fdfdfe,#eceff4)"></div>
<svg class="abs" style="left:280px;top:567px" width="14" height="14" viewBox="0 0 14 14"><circle cx="5.500" cy="5.500" r="3.500" fill="none" stroke="#333" stroke-width="1.400"/><path d="M8 8 L12 12" stroke="#333" stroke-width="2"/></svg>
<div class="abs" style="left:730px;top:560.500px;width:192.500px;height:27px;border:1px solid #d6d9de;border-bottom:0;border-radius:3px 3px 0 0;background:linear-gradient(180deg,#ffffff,#f4f5f8)"></div>
<svg class="abs" style="left:739px;top:565px" width="20" height="16" viewBox="0 0 20 16"><path d="M7 5 C10 5 12.500 6.800 12.500 9 C12.500 11.200 10 13 7 13 C6.300 13 5.600 12.900 5 12.700 L2.500 14 L3.300 11.800 C2.200 11.100 1.500 10.100 1.500 9 C1.500 6.800 4 5 7 5 Z" fill="#2a2a2a"/><path d="M12 2 C15 2 17.500 3.700 17.500 5.800 C17.500 6.900 16.900 7.800 15.900 8.500 L16.500 10.500 L14.200 9.400 C13.900 9.500 13.700 9.500 13.400 9.500 C13.300 6.500 10.500 4.500 7.500 4.300 C8.300 2.900 10 2 12 2 Z" fill="#2a2a2a"/></svg>
<div class="abs" style="left:763px;top:567px;font-size:9.800px;font-weight:bold;color:#2a2a2a;line-height:12px">Chat</div>
<!--FOOTER-END-->

<div class="abs" id="rb"></div>
<div class="abs" id="lb"></div>
<div class="abs" id="bb"></div>
</div>
<div id="soft" style="position:absolute;left:0;top:0;width:936px;height:588px;backdrop-filter:blur(.8px);-webkit-backdrop-filter:blur(.8px);opacity:.5;pointer-events:none"></div>
</body>
</html>
